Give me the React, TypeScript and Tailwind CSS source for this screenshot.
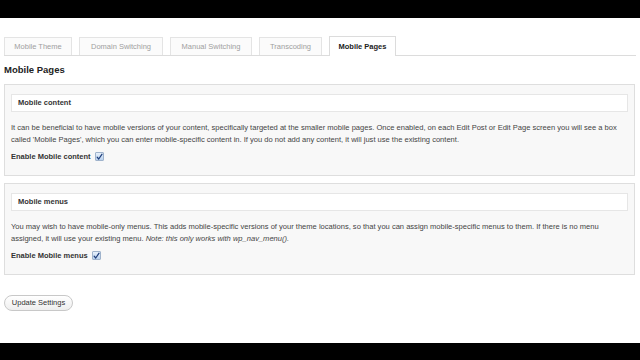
import React from 'react';

const TABS = [
  { label: 'Mobile Theme', w: 'w-[68px]' },
  { label: 'Domain Switching', w: 'w-[84px]' },
  { label: 'Manual Switching', w: 'w-[82px]' },
  { label: 'Transcoding', w: 'w-[63px]' },
];

function Check() {
  return (
    <span className="inline-flex w-[9px] h-[9px] items-center justify-center rounded-[1px] border border-[#9fb3cc] bg-gradient-to-b from-[#e8f1fb] to-[#b9d1ee] ml-[4px]">
      <svg width="8" height="8" viewBox="0 0 8 8">
        <path d="M1.3 4.2 L3.1 6.3 L6.9 0.8" fill="none" stroke="#1e3d7a" strokeWidth="1.4" strokeLinecap="round" strokeLinejoin="round" />
      </svg>
    </span>
  );
}

function Panel({ title, children, label }: { title: string; children: React.ReactNode; label: string }) {
  return (
    <div className="border border-[#dedede] bg-[#f8f8f8] h-[92px] px-[6px] pt-[9px]">
      <div className="h-[18px] border border-[#e6e6e6] bg-white flex items-center px-[6px] text-[7.5px] font-bold text-[#333]">
        {title}
      </div>
      <div className="mt-[10px] pr-[4px] text-[7.55px] leading-[12px] text-[#444]">{children}</div>
      <div className="mt-[5px] flex items-center text-[7.5px] font-bold text-[#333]">
        {label}
        <Check />
      </div>
    </div>
  );
}

export default function App() {
  return (
    <div className="w-[640px] h-[360px] flex flex-col bg-white" style={{ fontFamily: '"Liberation Sans", Arial, sans-serif' }}>
      <div className="h-[18px] bg-black" />
      <div className="flex-1 px-[4px] pt-[19px]">
        <div className="flex items-end gap-[7px] border-b border-[#dcdcdc] h-[19px]">
          {TABS.map(t => (
            <div key={t.label} className={`${t.w} h-[18px] border border-b-0 border-[#e4e4e4] bg-[#fbfbfb] flex items-center justify-center text-[7.5px] text-[#a0a0a0]`}>
              {t.label}
            </div>
          ))}
          <div className="w-[67px] h-[20px] -mb-px border border-b-0 border-[#dcdcdc] bg-white flex items-center justify-center text-[7.5px] font-bold text-[#222]">
            Mobile Pages
          </div>
        </div>
        <div className="mt-[8px] h-[12px] flex items-center text-[9.5px] font-bold text-[#222]">Mobile Pages</div>
        <div className="mt-[8px] flex flex-col gap-[7px] mr-[1px]">
          <Panel title="Mobile content" label="Enable Mobile content">
            It can be beneficial to have mobile versions of your content, specifically targeted at the smaller mobile pages. Once enabled, on each Edit Post or Edit Page screen you will see a box called 'Mobile Pages', which you can enter mobile-specific content in. If you do not add any content, it will just use the existing content.
          </Panel>
          <Panel title="Mobile menus" label="Enable Mobile menus">
            You may wish to have mobile-only menus. This adds mobile-specific versions of your theme locations, so that you can assign mobile-specific menus to them. If there is no menu assigned, it will use your existing menu. <i>Note: this only works with wp_nav_menu().</i>
          </Panel>
        </div>
        <div className="mt-[20px]">
          <button className="h-[16px] w-[69px] rounded-full border border-[#c8c8c8] bg-gradient-to-b from-white to-[#eeeeee] text-[7.5px] text-[#333] flex items-center justify-center">
            Update Settings
          </button>
        </div>
      </div>
      <div className="h-[17px] bg-black" />
    </div>
  );
}
